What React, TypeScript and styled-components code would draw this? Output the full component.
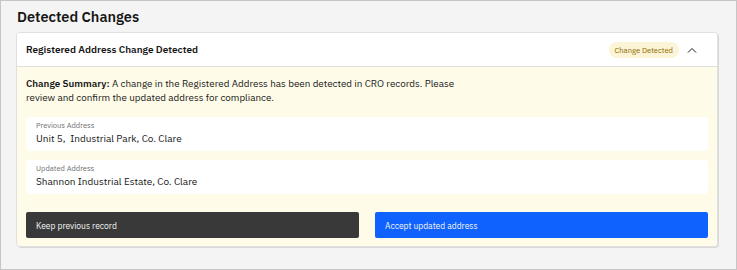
import React from "react";
import styled, { createGlobalStyle } from "styled-components";

const Global = createGlobalStyle`
  html, body { margin: 0; padding: 0; }
  body { font-family: "IBM Plex Sans", Roboto, "Liberation Sans", sans-serif; color: #161616; }
  * { box-sizing: border-box; }
`;

const Frame = styled.div`
  width: 737px;
  height: 270px;
  border: 1px solid #c6c6c6;
  background: #f4f4f4;
  padding: 5px 18px 0 15px;
`;

const Title = styled.h2`
  margin: 0 0 0 1px;
  font-size: 14.5px;
  font-weight: 600;
  line-height: 22px;
  height: 26px;
`;

const Card = styled.section`
  border: 1px solid #e0e0e0;
  border-radius: 4px;
  overflow: hidden;
  box-shadow: 1px 1px 0 #d8d8d8;
`;

const Header = styled.div`
  height: 34px;
  background: #fff;
  display: flex;
  align-items: center;
  padding: 0 12px 0 9px;
  border-bottom: 1px solid #e0e0e0;
`;

const HeaderTitle = styled.div`
  flex: 1;
  font-size: 10px;
  font-weight: 600;
`;

const Badge = styled.span`
  height: 16px;
  padding: 0 6px;
  border-radius: 8px;
  background: #fcf4d6;
  color: #8e6a00;
  font-size: 7.6px;
  display: inline-flex;
  align-items: center;
`;

const Chevron = styled.span`
  width: 26px;
  display: flex;
  justify-content: center;
  color: #161616;
`;

const Body = styled.div`
  background: #fefbe8;
  padding: 10px 9px 8px 9px;
`;

const Summary = styled.p`
  margin: 0 0 12px 0;
  font-size: 9.85px;
  line-height: 14px;
  max-width: 440px;
  strong { font-weight: 600; }
`;

const Field = styled.div`
  background: #fff;
  border-radius: 4px;
  height: 34px;
  padding: 3px 10px 0 10px;
  & + & { margin-top: 9px; }
`;

const FieldLabel = styled.div`
  font-size: 7.5px;
  color: #6f6f6f;
  line-height: 11px;
`;

const FieldValue = styled.div`
  font-size: 10px;
  line-height: 15px;
`;

const Actions = styled.div`
  display: grid;
  grid-template-columns: 1fr 1fr;
  gap: 16px;
  margin-top: 18px;
`;

const Button = styled.button<{ $kind: "secondary" | "primary" }>`
  height: 26px;
  border: none;
  border-radius: 2px;
  text-align: left;
  padding: 0 10px;
  font-family: inherit;
  font-size: 8.5px;
  color: #f4f4f4;
  background: ${(p) => (p.$kind === "primary" ? "#0f62fe" : "#393939")};
`;

export default function App() {
  return (
    <>
      <Global />
      <Frame>
        <Title>Detected Changes</Title>
        <Card>
          <Header>
            <HeaderTitle>Registered Address Change Detected</HeaderTitle>
            <Badge>Change Detected</Badge>
            <Chevron>
              <svg width="10" height="6" viewBox="0 0 10 6" fill="none">
                <path d="M1 5.5 L5 1.5 L9 5.5" stroke="#161616" strokeWidth="1" />
              </svg>
            </Chevron>
          </Header>
          <Body>
            <Summary>
              <strong>Change Summary:</strong> A change in the Registered Address has been detected in CRO records. Please review and confirm the updated address for compliance.
            </Summary>
            <Field>
              <FieldLabel>Previous Address</FieldLabel>
              <FieldValue>Unit 5,&nbsp; Industrial Park, Co. Clare</FieldValue>
            </Field>
            <Field>
              <FieldLabel>Updated Address</FieldLabel>
              <FieldValue>Shannon Industrial Estate, Co. Clare</FieldValue>
            </Field>
            <Actions>
              <Button $kind="secondary">Keep previous record</Button>
              <Button $kind="primary">Accept updated address</Button>
            </Actions>
          </Body>
        </Card>
      </Frame>
    </>
  );
}
